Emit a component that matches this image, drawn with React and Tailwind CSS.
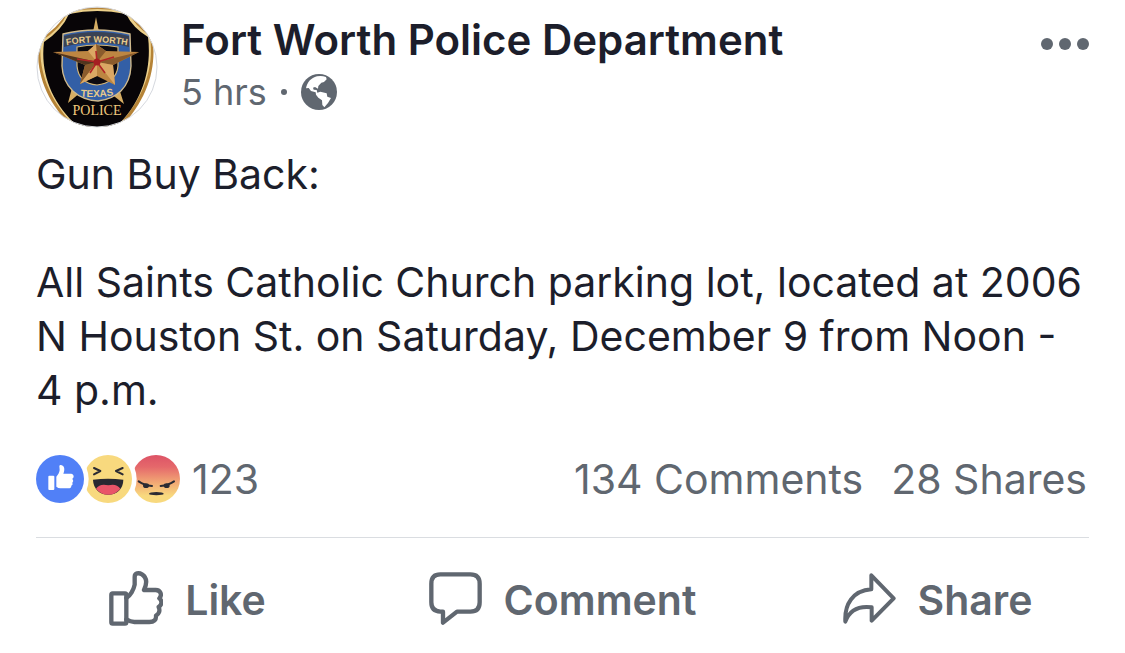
import React from "react";

function Badge() {
  return (
    <svg viewBox="6 6 122 122" className="h-[122px] w-[122px]" role="img" aria-label="Fort Worth Police badge">
      <defs>
        <clipPath id="avatar-clip">
          <circle cx="67" cy="67" r="60" />
        </clipPath>
        <path id="arc-top" d="M28 47 Q66 38 106 47" />
        <path id="arc-bottom" d="M40 95 Q66 100 94 93" />
      </defs>
      <circle cx="67" cy="67" r="60" fill="#fff" />
      <g clipPath="url(#avatar-clip)">
        <path d="M38 11 Q67 4 98 11 Q106 24 122 34 C128 70 116 104 84 134 L52 134 C18 110 4 72 9 40 Q28 28 38 11Z" fill="#b58337" />
        <path d="M38 12 Q67 6 98 12 Q105 26 120 36 C125 70 112 104 80 134 L54 134 C22 108 7 72 11 41 Q30 30 38 12Z" fill="#ecd08a" />
        <path d="M39 14 Q67 8 96 14 Q103 28 118 37 C122 68 113 106 80 132 L54 132 C22 106 10 74 14 42 Q32 30 39 14Z" fill="#080507" />
        <path d="M66 17 L70 37 L62 37Z M38 103 L43 84 L51 92Z M94 104 L88 85 L80 93Z" fill="#d6ad63" />
        <path d="M33 34 Q66 26 100 34 L101 66 C100 88 86 99 68 101 C48 100 33 87 32 66Z" fill="#335fa6" stroke="#cfb98c" strokeWidth="1.4" />
        <path d="M34 36 Q66 28 99 36 L99 47 Q66 38 34 47Z" fill="#3a4254" />
        <path d="M47 47 Q66 43 88 47 L88 66 C87 78 78 84 67 85 C55 84 48 77 47 66Z" fill="#0d0b10" stroke="#d2b578" strokeWidth="1.2" />
        <path d="M66 44 L76 51 L109 52 L83 65 L85 85 L67 76 L50 84 L55 65 L23 52 L58 51Z" fill="#bd8642" />
        <path d="M66 44 L76 51 L67 62Z M109 52 L83 65 L67 62Z M50 84 L55 65 L67 62Z" fill="#8a5b2c" />
        <path d="M66 44 L58 51 L67 62Z M85 85 L83 65 L67 62Z M50 84 L67 76 L67 62Z" fill="#dba864" />
        <path d="M23 52 L55 65 L67 62Z" fill="#51351e" />
        <path d="M67 62 L84 57 M67 62 L47 59 M67 62 L66 51 M67 62 L60 73 M67 62 L75 73" stroke="#b32527" strokeWidth="1.6" />
        <circle cx="67" cy="62" r="3.5" fill="#a51e22" />
        <g fill="#e8cb8c" fontFamily="Liberation Sans, sans-serif" fontWeight="700">
          <text fontSize="9"><textPath href="#arc-top" startOffset="50%" textAnchor="middle">FORT WORTH</textPath></text>
          <text fontSize="10"><textPath href="#arc-bottom" startOffset="50%" textAnchor="middle">TEXAS</textPath></text>
          <text x="67" y="115" fontSize="14" textAnchor="middle" fontFamily="Liberation Serif, serif" fill="#f0c97c" fontWeight="400">POLICE</text>
        </g>
      </g>
      <circle cx="67" cy="67" r="60" fill="none" stroke="#d5d8de" strokeWidth="1" />
    </svg>
  );
}

function Globe() {
  return (
    <svg viewBox="0 0 108 108" className="h-9 w-9" role="img" aria-label="Public">
      <circle cx="54" cy="54" r="54" fill="#606770" />
      <path d="M15 43 C18 26 30 11 48 7 Q62 4 75 9 L77 16 L69 24 L61 26 L52 36 L51 44 L42 39 L36 41 L38 47 L47 48 L49 56 L58 53 L77 58 L79 68 L90 72 L81 87 L70 100 L64 93 L63 79 L52 71 L45 62 L44 55 L30 51 L23 42Z" fill="#fff" />
    </svg>
  );
}

function Reactions() {
  return (
    <span className="flex" aria-hidden="true">
      <svg viewBox="0 0 144 144" className="h-12 w-12">
        <circle cx="72" cy="72" r="72" fill="#5180f7" />
        <rect x="37" y="62" width="18" height="43" rx="3" fill="#fff" />
        <path d="M61 65 C67 59 70 52 71 45 L70 33 Q71 29 75 30 C86 32 87 44 82 56 L105 56 Q113 57 113 65 Q112 70 109 71 Q114 77 109 83 Q112 89 106 92 Q106 100 97 100 L73 100 Q67 100 61 95Z" fill="#fff" />
      </svg>
      <svg viewBox="0 0 144 144" className="h-12 w-12">
        <circle cx="72" cy="72" r="72" fill="#f8d97e" />
        <circle cx="-72" cy="72" r="86" fill="#fff" />
        <path d="M30 39 L49 48 L30 58 M116 39 L96 48 L116 58" fill="none" stroke="#2b2b33" strokeWidth="6" strokeLinecap="round" strokeLinejoin="round" />
        <path d="M27 74 Q72 68 118 74 C118 101 98 119 73 119 C47 119 28 101 27 74Z" fill="#292831" />
        <path d="M36 101 Q48 84 73 91 Q97 84 109 101 Q95 119 73 119 Q50 119 36 101Z" fill="#e95468" />
      </svg>
      <svg viewBox="0 0 144 144" className="h-12 w-12">
        <defs>
          <linearGradient id="anger" x1="0" y1="0" x2="0" y2="1">
            <stop offset="0" stopColor="#dd5366" />
            <stop offset="0.25" stopColor="#e5686b" />
            <stop offset="0.6" stopColor="#f3ad75" />
            <stop offset="0.85" stopColor="#f8d97e" />
          </linearGradient>
        </defs>
        <circle cx="72" cy="72" r="72" fill="url(#anger)" />
        <circle cx="-72" cy="72" r="86" fill="#fff" />
        <path d="M20 79 Q36 91 60 93 M126 79 Q109 91 86 93" fill="none" stroke="#2b2b33" strokeWidth="6" strokeLinecap="round" />
        <ellipse cx="42" cy="92" rx="9" ry="7" fill="#2b2b33" />
        <ellipse cx="104" cy="92" rx="9" ry="7" fill="#2b2b33" />
        <ellipse cx="73" cy="116" rx="22" ry="5" fill="#2b2b33" />
      </svg>
    </span>
  );
}

const outline = {
  fill: "none",
  stroke: "#606770",
  strokeLinecap: "round",
  strokeLinejoin: "round",
  "aria-hidden": true,
};

function LikeIcon() {
  return (
    <svg viewBox="0 0 162 165" className="h-[55px] w-[54px]" strokeWidth="13" {...outline}>
      <rect x="7" y="67" width="45" height="91" rx="4" />
      <path d="M52 81 C64 75 74 56 77 41 L77 18 C77 6 89 4 99 10 C116 21 113 40 105 57 L140 57 C155 57 160 72 151 82 C161 90 158 103 149 108 C154 119 150 129 141 134 C142 146 135 153 121 153 L76 153 Q65 153 52 145" />
    </svg>
  );
}

function CommentIcon() {
  return (
    <svg viewBox="0 0 159 159" className="h-[53px] w-[53px]" strokeWidth="13" {...outline}>
      <path d="M34 7 H124 Q152 7 152 35 V91 Q152 119 124 119 H84 L42 152 V119 H34 Q7 118 7 91 V35 Q7 7 34 7Z" />
    </svg>
  );
}

function ShareIcon() {
  return (
    <svg viewBox="0 0 159 153" className="h-[51px] w-[53px]" strokeWidth="12" {...outline}>
      <path d="M85 7 L152 76 L86 143 V103 C47 98 19 113 7 146 C4 94 29 53 85 49Z" />
    </svg>
  );
}

function Action({ icon, children }) {
  return (
    <button type="button" className="flex items-center justify-center gap-[22px] text-[41px] leading-[56px] font-semibold text-[#606770]">
      {icon}
      <span className="pt-1">{children}</span>
    </button>
  );
}

export default function App() {
  return (
    <article className="min-h-screen bg-white pt-1.5 font-['Inter','Liberation_Sans',sans-serif] text-[#1c1e2b]">
      <div className="px-9">
        <header className="flex items-start gap-[23px]">
          <Badge />
          <div className="min-w-0 flex-1 pt-2">
            <h1 className="text-[42px] leading-[52px] font-semibold">Fort Worth Police Department</h1>
            <div className="flex items-center gap-3 text-[36px] leading-[52px] text-[#606770]">
              <span>5 hrs</span>
              <span aria-hidden="true" className="mx-0.5 h-1.5 w-1.5 rounded-full bg-[#606770]" />
              <Globe />
            </div>
          </div>
          <button type="button" aria-label="More options" className="flex gap-1.5 pt-8">
            <span className="h-3 w-3 rounded-full bg-[#606770]" />
            <span className="h-3 w-3 rounded-full bg-[#606770]" />
            <span className="h-3 w-3 rounded-full bg-[#606770]" />
          </button>
        </header>
        <div className="mt-[19px] text-[41px] leading-[54px]">
          <p>Gun Buy Back:</p>
          <p className="mt-[54px]">
            All Saints Catholic Church parking lot, located at 2006 N Houston St. on Saturday, December 9 from Noon - 4 p.m.
          </p>
        </div>
        <div className="mt-[38px] flex items-center justify-between border-b border-[#dadde1] pb-[34px] text-[41px] leading-[46px] text-[#606770]">
          <a href="#reactions" className="flex items-center gap-3">
            <Reactions />
            <span>123</span>
          </a>
          <span className="flex gap-7 pr-0.5">
            <a href="#comments">134 Comments</a>
            <a href="#shares">28 Shares</a>
          </span>
        </div>
      </div>
      <div className="grid grid-cols-3 pt-[30px]">
        <Action icon={<LikeIcon />}>Like</Action>
        <Action icon={<CommentIcon />}>Comment</Action>
        <Action icon={<ShareIcon />}>Share</Action>
      </div>
    </article>
  );
}
